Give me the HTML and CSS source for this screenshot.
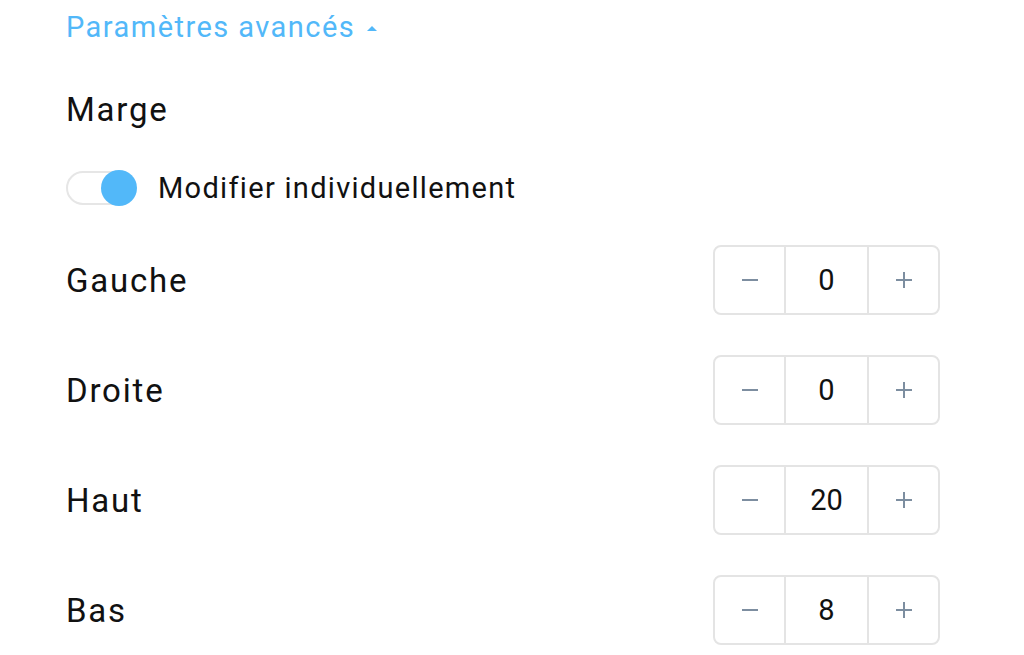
FILE: index.html
```html
<!DOCTYPE html>
<html lang="fr">
<head>
<meta charset="utf-8">
<title>Paramètres avancés</title>
<link rel="stylesheet" href="styles.css">
</head>
<body>
<div class="panel">
  <div class="adv-toggle">
    <span>Paramètres avancés</span>
    <span class="caret"></span>
  </div>
  <div class="section-title">Marge</div>
  <div class="switch-row">
    <div class="switch"><div class="thumb"></div></div>
    <span class="switch-label">Modifier individuellement</span>
  </div>
  <div class="rows">
    <div class="row">
      <span class="label">Gauche</span>
      <div class="stepper">
        <button class="btn"><svg width="16" height="16" viewBox="0 0 16 16"><path d="M0 8h16" stroke="currentColor" stroke-width="2"/></svg></button>
        <div class="value">0</div>
        <button class="btn"><svg width="16" height="16" viewBox="0 0 16 16"><path d="M0 8h16M8 0v16" stroke="currentColor" stroke-width="2"/></svg></button>
      </div>
    </div>
    <div class="row">
      <span class="label">Droite</span>
      <div class="stepper">
        <button class="btn"><svg width="16" height="16" viewBox="0 0 16 16"><path d="M0 8h16" stroke="currentColor" stroke-width="2"/></svg></button>
        <div class="value">0</div>
        <button class="btn"><svg width="16" height="16" viewBox="0 0 16 16"><path d="M0 8h16M8 0v16" stroke="currentColor" stroke-width="2"/></svg></button>
      </div>
    </div>
    <div class="row">
      <span class="label">Haut</span>
      <div class="stepper">
        <button class="btn"><svg width="16" height="16" viewBox="0 0 16 16"><path d="M0 8h16" stroke="currentColor" stroke-width="2"/></svg></button>
        <div class="value">20</div>
        <button class="btn"><svg width="16" height="16" viewBox="0 0 16 16"><path d="M0 8h16M8 0v16" stroke="currentColor" stroke-width="2"/></svg></button>
      </div>
    </div>
    <div class="row">
      <span class="label">Bas</span>
      <div class="stepper">
        <button class="btn"><svg width="16" height="16" viewBox="0 0 16 16"><path d="M0 8h16" stroke="currentColor" stroke-width="2"/></svg></button>
        <div class="value">8</div>
        <button class="btn"><svg width="16" height="16" viewBox="0 0 16 16"><path d="M0 8h16M8 0v16" stroke="currentColor" stroke-width="2"/></svg></button>
      </div>
    </div>
  </div>
</div>
</body>
</html>
```
FILE: styles.css
```css
html, body {
  margin: 0;
  padding: 0;
  background: #ffffff;
}
body {
  font-family: Roboto, "Liberation Sans", sans-serif;
  color: #111111;
  width: 1024px;
  height: 655px;
  overflow: hidden;
}
.panel {
  padding: 7px 84px 0 66px;
}
.adv-toggle {
  display: flex;
  align-items: center;
  gap: 12px;
  height: 40px;
  font-size: 29px;
  letter-spacing: 1.45px;
  color: #52b8f9;
}
.caret {
  width: 0;
  height: 0;
  border-left: 5px solid transparent;
  border-right: 5px solid transparent;
  border-bottom: 5px solid #52b8f9;
  margin-top: 2px;
}
.section-title {
  margin-top: 43px;
  height: 40px;
  line-height: 40px;
  font-size: 33px;
  letter-spacing: 1.8px;
}
.switch-row {
  display: flex;
  align-items: center;
  margin-top: 40px;
  height: 36px;
}
.switch {
  position: relative;
  width: 70px;
  height: 34px;
  box-sizing: border-box;
  border: 2px solid #e6e6e6;
  border-radius: 17px;
  background: #ffffff;
}
.thumb {
  position: absolute;
  right: -3px;
  top: -3px;
  width: 36px;
  height: 36px;
  border-radius: 50%;
  background: #52b8f9;
}
.switch-label {
  margin-left: 22px;
  font-size: 29px;
  letter-spacing: 1.3px;
}
.rows {
  margin-top: 39px;
  display: flex;
  flex-direction: column;
  gap: 40px;
}
.row {
  display: flex;
  align-items: center;
  justify-content: space-between;
  height: 70px;
}
.label {
  font-size: 33px;
  letter-spacing: 1.8px;
}
.stepper {
  display: flex;
  width: 227px;
  height: 70px;
  box-sizing: border-box;
  border: 2px solid #e4e4e4;
  border-radius: 8px;
}
.btn {
  width: 69px;
  flex: none;
  border: 0;
  margin: 0;
  padding: 0;
  background: transparent;
  color: #7d8ea0;
  display: flex;
  align-items: center;
  justify-content: center;
}
.value {
  flex: 1;
  display: flex;
  align-items: center;
  justify-content: center;
  border-left: 2px solid #e4e4e4;
  border-right: 2px solid #e4e4e4;
  font-size: 29px;
  color: #111111;
}
```
